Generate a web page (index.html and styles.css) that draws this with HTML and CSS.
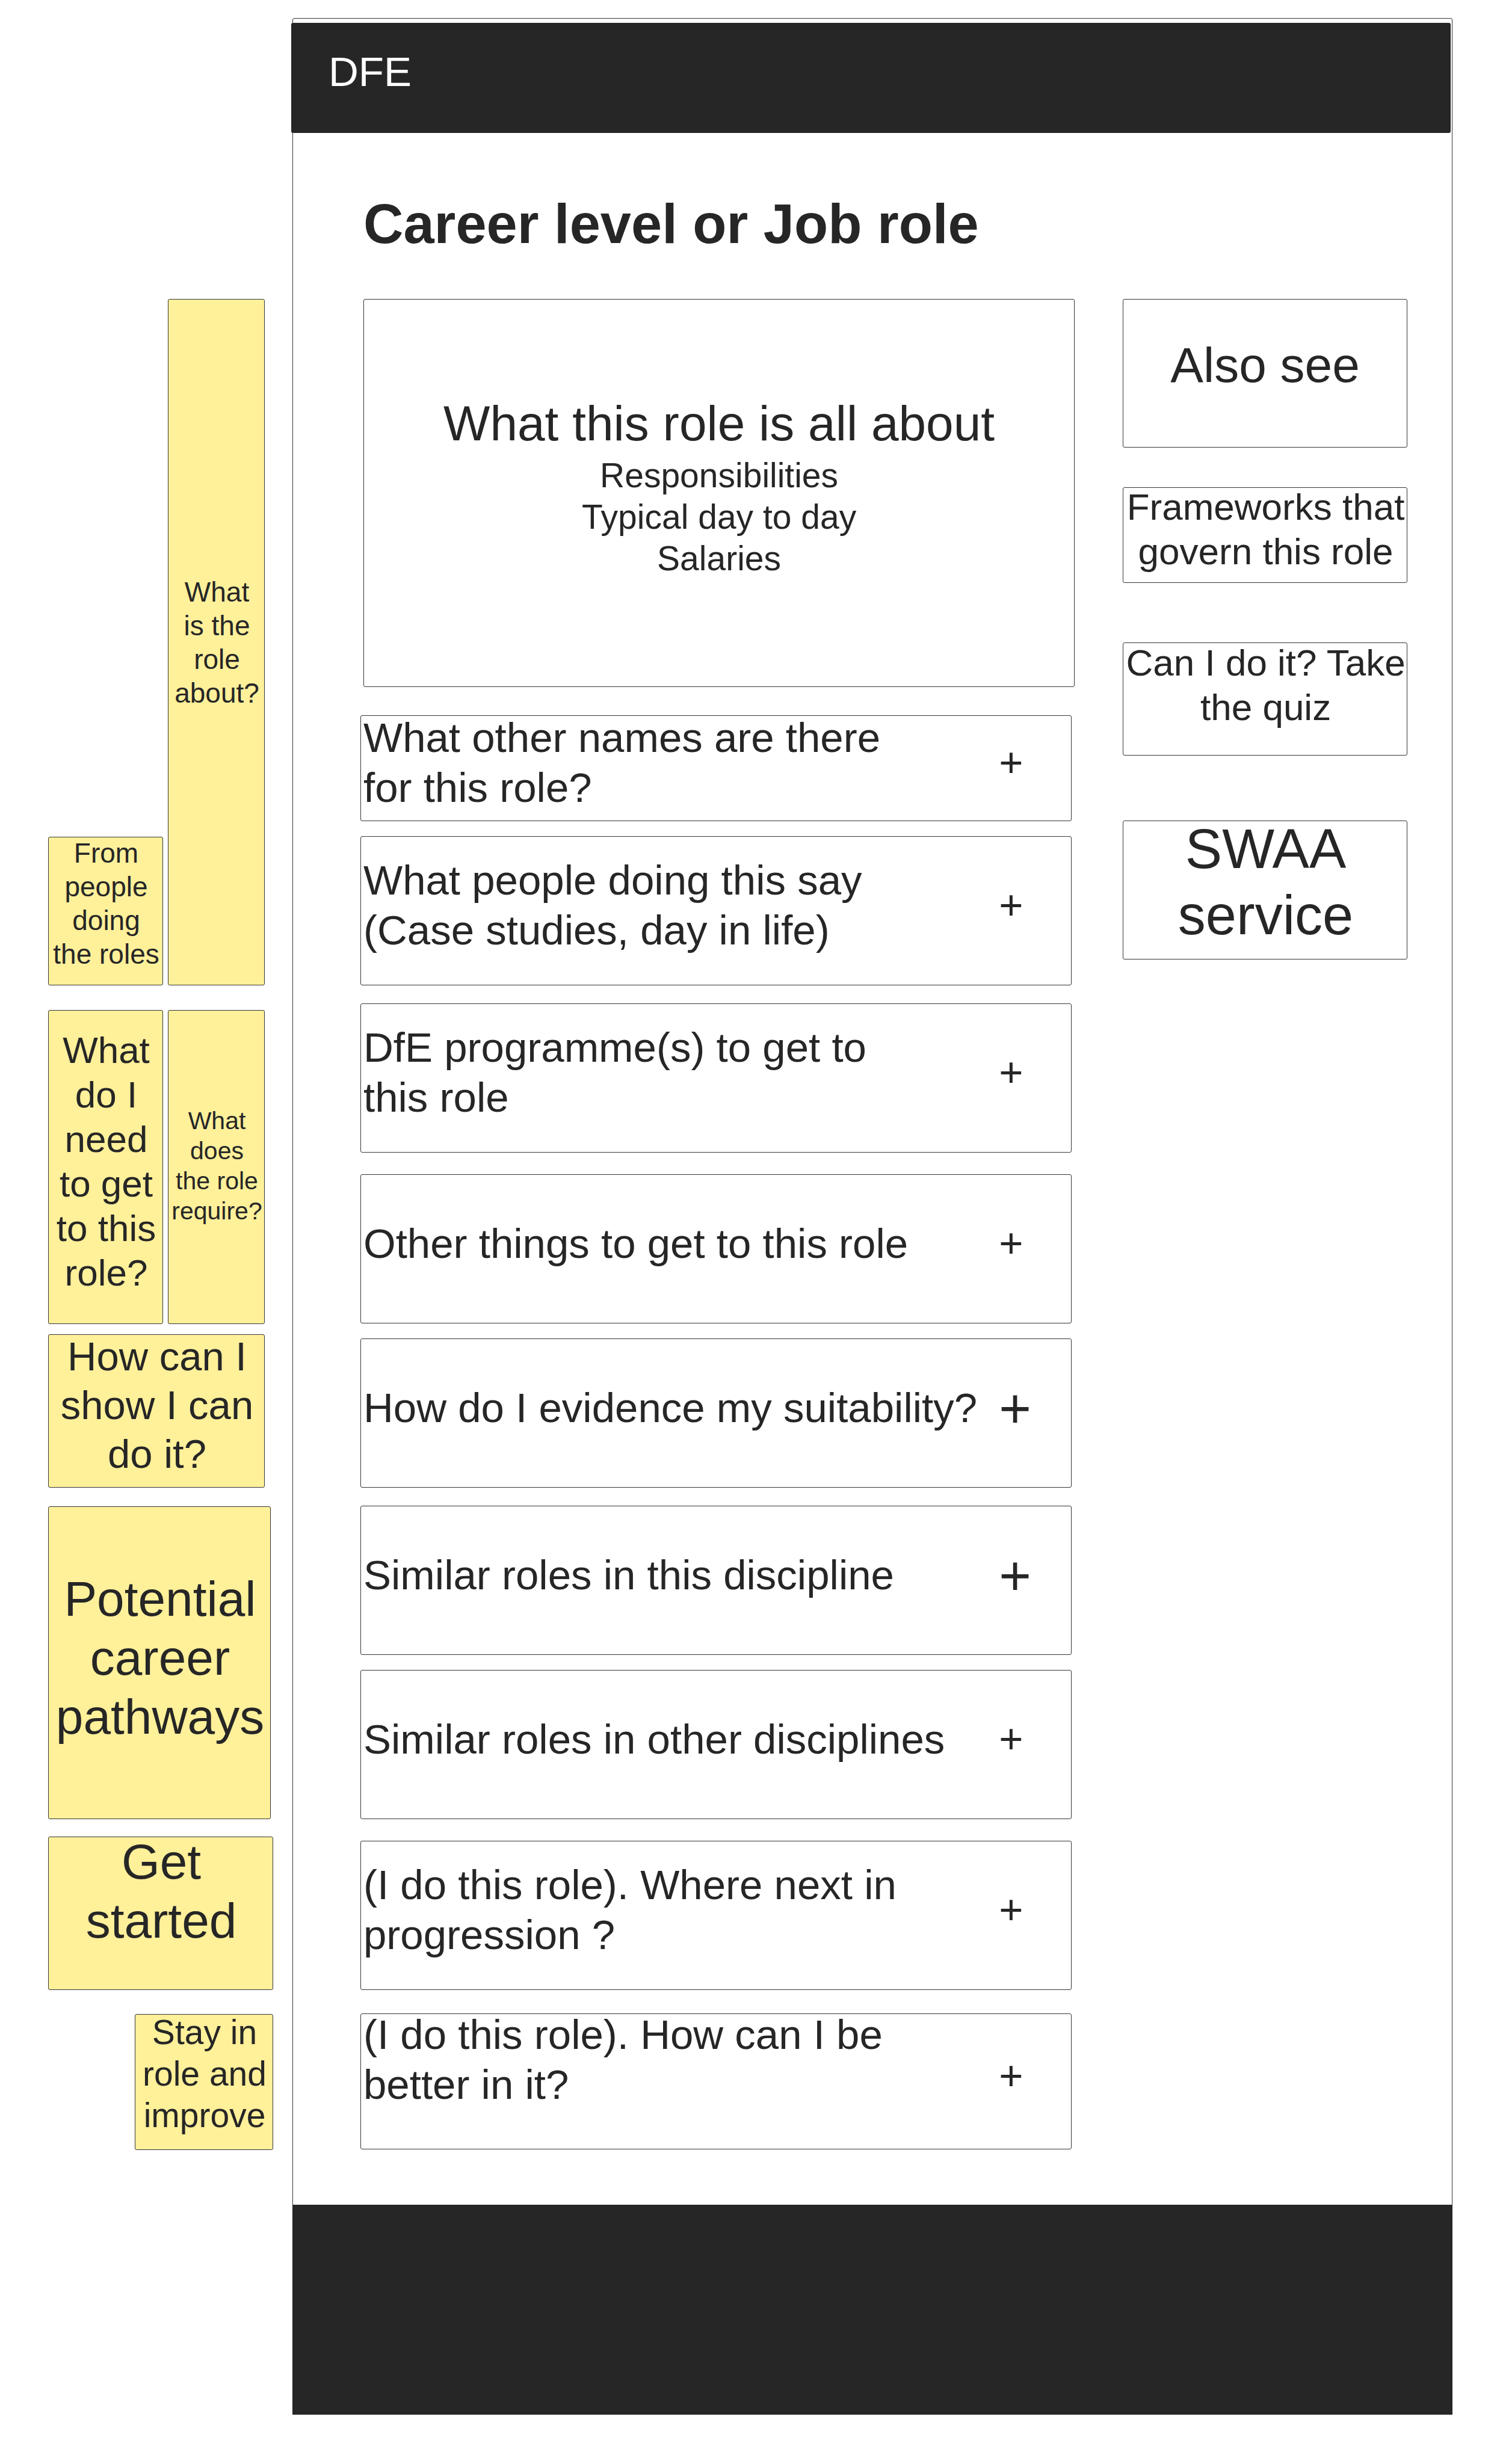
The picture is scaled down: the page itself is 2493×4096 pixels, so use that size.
FILE: index.html
```html
<!DOCTYPE html>
<html lang="en">
<head>
<meta charset="utf-8">
<title>Career level or Job role</title>
<link rel="stylesheet" href="styles.css">
</head>
<body>
<div class="page">
  <aside class="notes" aria-label="Notes">
    <div class="note-row note-row-about">
      <p class="note note-people">From<br>people<br>doing<br>the roles</p>
      <p class="note note-about">What<br>is the<br>role<br>about?</p>
    </div>
    <div class="note-row note-row-need">
      <p class="note note-need">What<br>do I<br>need<br>to get<br>to this<br>role?</p>
      <p class="note note-require">What<br>does<br>the role<br>require?</p>
    </div>
    <p class="note note-show">How can I<br>show I can<br>do it?</p>
    <p class="note note-pathways">Potential<br>career<br>pathways</p>
    <p class="note note-started">Get<br>started</p>
    <p class="note note-stay">Stay in<br>role and<br>improve</p>
  </aside>

  <div class="frame">
    <header class="header">DFE</header>
    <main class="main">
      <h1 class="title">Career level or Job role</h1>
      <div class="columns">
        <div class="content">
          <section class="box hero">
            <h2 class="hero-title">What this role is all about</h2>
            <p class="hero-text">Responsibilities<br>Typical day to day<br>Salaries</p>
          </section>
          <div class="accordion">
            <button class="item item-short" type="button"><span class="label">What other names are there<br>for this role?</span><span class="plus">+</span></button>
            <button class="item" type="button"><span class="label">What people doing this say<br>(Case studies, day in life)</span><span class="plus">+</span></button>
            <button class="item space-m" type="button"><span class="label">DfE programme(s) to get to<br>this role</span><span class="plus">+</span></button>
            <button class="item space-l" type="button"><span class="label">Other things to get to this role</span><span class="plus">+</span></button>
            <button class="item" type="button"><span class="label">How do I evidence my suitability?</span><span class="plus plus-large">+</span></button>
            <button class="item space-m" type="button"><span class="label">Similar roles in this discipline</span><span class="plus plus-large">+</span></button>
            <button class="item" type="button"><span class="label">Similar roles in other disciplines</span><span class="plus">+</span></button>
            <button class="item space-l" type="button"><span class="label">(I do this role). Where next in<br>progression ?</span><span class="plus">+</span></button>
            <button class="item item-last" type="button"><span class="label">(I do this role). How can I be<br>better in it?</span><span class="plus">+</span></button>
          </div>
        </div>
        <nav class="related" aria-label="Related">
          <h2 class="box see">Also see</h2>
          <a class="box frameworks" href="#">Frameworks that<br>govern this role</a>
          <a class="box quiz" href="#">Can I do it? Take<br>the quiz</a>
          <a class="box swaa" href="#">SWAA<br>service</a>
        </nav>
      </div>
    </main>
    <footer class="footer"></footer>
  </div>
</div>
</body>
</html>
```
FILE: styles.css
```css
:root {
  --ink: #262626;
  --line: #363636;
  --note: #fff09a;
}

* {
  box-sizing: border-box;
}

body {
  margin: 0;
  background: #fff;
  color: var(--ink);
  font-family: "Liberation Sans", Arial, sans-serif;
}

h1, h2, p {
  margin: 0;
  font-weight: 400;
}

.page {
  display: flex;
  gap: 32px;
  min-height: 100vh;
  padding: 30px 79px 82px 80px;
  align-items: flex-start;
}

/* Sticky notes beside the page */
.notes {
  display: flex;
  flex-direction: column;
  flex: 0 0 374px;
  padding-top: 467px;
}

.note-row {
  display: flex;
  gap: 8px;
}

.note-row-about {
  align-items: flex-end;
  margin-bottom: 41px;
}

.note-row-need {
  margin-bottom: 17px;
}

.note {
  display: flex;
  align-items: center;
  justify-content: center;
  padding-left: 2px;
  border: 1px solid var(--line);
  border-radius: 3px;
  background: var(--note);
  text-align: center;
  white-space: nowrap;
}

.note-people,
.note-about {
  font-size: 46px;
  line-height: 56px;
}

.note-people,
.note-need {
  width: 191px;
}

.note-about,
.note-require {
  width: 161px;
}

.note-people {
  height: 247px;
  padding-bottom: 25px;
}

.note-about {
  height: 1141px;
}

.note-need {
  height: 522px;
  padding-bottom: 18px;
  font-size: 62px;
  line-height: 74px;
}

.note-require {
  height: 522px;
  padding-bottom: 4px;
  font-size: 41px;
  line-height: 50px;
}

.note-show {
  width: 360px;
  height: 255px;
  margin-bottom: 31px;
  padding-bottom: 20px;
  font-size: 67px;
  line-height: 81px;
}

.note-pathways {
  width: 370px;
  height: 520px;
  margin-bottom: 29px;
  padding-bottom: 16px;
  font-size: 82px;
  line-height: 98px;
}

.note-started {
  height: 255px;
  margin-bottom: 40px;
  padding-bottom: 74px;
  font-size: 82px;
  line-height: 98px;
}

.note-stay {
  align-self: flex-end;
  width: 230px;
  height: 226px;
  padding-bottom: 27px;
  font-size: 57px;
  line-height: 69px;
}

/* Page frame */
.frame {
  flex: 1;
  min-width: 0;
  border: 1px solid var(--line);
  border-radius: 3px;
}

.header {
  display: flex;
  align-items: center;
  height: 183px;
  margin: 7px 2px 0 -3px;
  padding: 0 62px 20px;
  border-radius: 3px;
  background: var(--ink);
  color: #fff;
  font-size: 69px;
  line-height: 83px;
}

.main {
  padding: 96px 74px 92px 117px;
}

.title {
  margin-bottom: 70px;
  font-size: 92px;
  font-weight: 700;
  line-height: 110px;
}

.columns {
  display: grid;
  grid-template-columns: minmax(0, 5fr) minmax(0, 2fr);
  gap: 80px;
  align-items: start;
}

.box {
  display: flex;
  align-items: center;
  justify-content: center;
  border: 1px solid var(--line);
  border-radius: 3px;
  color: inherit;
  text-align: center;
  text-decoration: none;
}

.hero {
  flex-direction: column;
  gap: 3px;
  height: 645px;
  margin-bottom: 47px;
  padding-bottom: 22px;
}

.hero-title {
  font-size: 82px;
  line-height: 98px;
}

.hero-text {
  font-size: 57px;
  line-height: 69px;
}

/* Expandable questions */
.accordion {
  display: flex;
  flex-direction: column;
  gap: 25px;
  margin: 0 5px 0 -5px;
}

.item {
  display: flex;
  align-items: stretch;
  justify-content: space-between;
  height: 248px;
  padding: 0 0 0 4px;
  border: 1px solid var(--line);
  border-radius: 3px;
  background: transparent;
  color: inherit;
  font: inherit;
  font-size: 69px;
  line-height: 83px;
  text-align: left;
  white-space: nowrap;
}

.label,
.plus {
  display: flex;
  align-items: center;
  padding-bottom: 18px;
}

.plus {
  width: 120px;
  padding-bottom: 20px;
}

.plus-large {
  padding-bottom: 16px;
  font-size: 92px;
}

.item-short {
  height: 176px;
}

.space-m {
  margin-top: 5px;
}

.space-l {
  margin-top: 11px;
}

.item-last {
  height: 226px;
  margin-top: 14px;
}

.item-last .label {
  padding-bottom: 73px;
}

/* Related links */
.related {
  display: flex;
  flex-direction: column;
}

.see {
  height: 247px;
  margin-bottom: 66px;
  padding-bottom: 27px;
  font-size: 82px;
  line-height: 98px;
}

.frameworks,
.quiz {
  padding-left: 2px;
  font-size: 62px;
  line-height: 74px;
  white-space: nowrap;
}

.frameworks {
  height: 159px;
  margin-bottom: 99px;
  padding-bottom: 20px;
}

.quiz {
  height: 188px;
  margin-bottom: 108px;
  padding-bottom: 47px;
}

.swaa {
  height: 231px;
  padding-bottom: 28px;
  padding-left: 2px;
  font-size: 92px;
  line-height: 110px;
}

.footer {
  height: 349px;
  margin: 0 -1px -1px;
  background: var(--ink);
}
```
